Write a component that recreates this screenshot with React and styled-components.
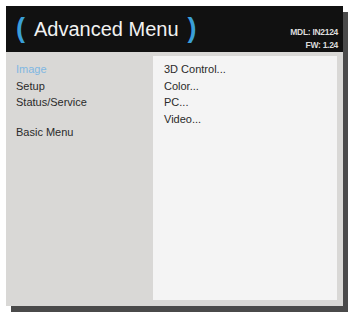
import React from "react";
import styled, { createGlobalStyle } from "styled-components";

const GlobalStyle = createGlobalStyle`
  html, body {
    margin: 0;
    padding: 0;
    background: #ffffff;
  }
  body {
    font-family: "Liberation Sans", Arial, sans-serif;
  }
`;

const Page = styled.div`
  width: 348px;
  height: 312px;
  padding: 6px 0 0 6px;
  box-sizing: border-box;
`;

const Frame = styled.div`
  width: 337px;
  height: 300px;
  display: flex;
  flex-direction: column;
  background: #d9d8d6;
  box-shadow: 5px 6px 0 #4a4a4a;
`;

const Header = styled.div`
  height: 46px;
  background: #111111;
  display: flex;
  align-items: center;
  justify-content: space-between;
  padding: 0 5px 0 10px;
`;

const Title = styled.div`
  display: flex;
  align-items: center;
  color: #f2f2f2;
  font-size: 20px;
  margin-top: 1px;
`;

const Bracket = styled.span`
  color: #3a9fd8;
  font-size: 27px;
  font-weight: bold;
  margin: ${(p) => (p.$right ? "0 0 0 9px" : "0 9px 0 0")};
  position: relative;
  top: -1px;
`;

const Info = styled.div`
  display: flex;
  flex-direction: column;
  align-items: flex-end;
  color: #dcdcdc;
  font-size: 8.5px;
  font-weight: bold;
  line-height: 13px;
  margin-top: 20px;
  letter-spacing: -0.3px;
`;

const Body = styled.div`
  flex: 1;
  display: flex;
  padding: 4px 6px 6px 10px;
`;

const Side = styled.div`
  width: 137px;
  display: flex;
  flex-direction: column;
  padding-top: 5px;
`;

const Item = styled.div`
  font-size: 11px;
  line-height: 16.5px;
  color: ${(p) => (p.$active ? "#80b7e2" : "#2a2a2a")};
  margin-top: ${(p) => (p.$gap ? "13px" : "0")};
`;

const Panel = styled.div`
  flex: 1;
  background: #f4f4f4;
  display: flex;
  flex-direction: column;
  padding: 5px 0 0 11px;
`;

export default function App() {
  return (
    <>
      <GlobalStyle />
      <Page>
        <Frame>
          <Header>
            <Title>
              <Bracket>(</Bracket>
              Advanced Menu
              <Bracket $right>)</Bracket>
            </Title>
            <Info>
              <span>MDL: IN2124</span>
              <span>FW: 1.24</span>
            </Info>
          </Header>
          <Body>
            <Side>
              <Item $active>Image</Item>
              <Item>Setup</Item>
              <Item>Status/Service</Item>
              <Item $gap>Basic Menu</Item>
            </Side>
            <Panel>
              <Item>3D Control...</Item>
              <Item>Color...</Item>
              <Item>PC...</Item>
              <Item>Video...</Item>
            </Panel>
          </Body>
        </Frame>
      </Page>
    </>
  );
}
